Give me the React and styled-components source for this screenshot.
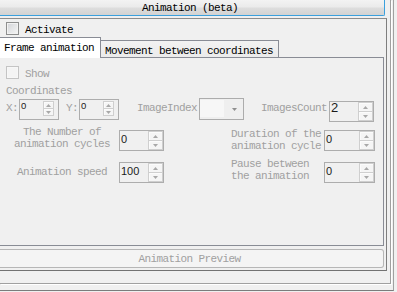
import React from 'react';
import styled, { createGlobalStyle } from 'styled-components';

const Global = createGlobalStyle`
  html, body { margin: 0; padding: 0; background: #f0f0f0; }
  body {
    font-family: "Liberation Mono", "DejaVu Sans Mono", monospace;
    font-size: 11px;
    letter-spacing: -0.6px;
    color: #000;
  }
  * { box-sizing: border-box; }
`;

const Shell = styled.div`
  width: 394px;
  height: 291px;
  border-right: 1px solid #a0a0a0;
  border-bottom: 1px solid #7c7c7c;
  padding: 0 2px 6px 0;
`;

const Inner = styled.div`
  width: 391px;
  height: 284px;
  border-right: 1px solid #a0a0a0;
  border-bottom: 1px solid #a0a0a0;
  box-shadow: 1px 1px 0 #ffffff;
  display: flex;
  flex-direction: column;
`;

const HeaderButton = styled.div`
  width: 385px;
  height: 16px;
  border-right: 1px solid #3ba0dd;
  border-bottom: 1px solid #3ba0dd;
  border-bottom-right-radius: 2px;
  background: linear-gradient(#f3f3f3, #ebebeb 45%, #dddddd 55%, #d3d3d3);
  text-align: center;
  padding: 2px 4px 0 0;
  line-height: 12px;
  white-space: nowrap;
`;

const GroupBox = styled.div`
  margin-top: 2px;
  width: 387px;
  height: 253px;
  border-top: 1px solid #8c8c8c;
  border-right: 1px solid #7e7e7e;
  border-bottom: 1px solid #727272;
  display: flex;
  flex-direction: column;
`;

const CheckRow = styled.div`
  margin-top: ${p => p.$top}px;
  padding-left: 6px;
  height: 13px;
  display: flex;
  align-items: flex-start;
  gap: 6px;
`;

const CheckBox = styled.div`
  width: 13px;
  height: 13px;
  flex: none;
  border: 1px solid ${p => (p.$disabled ? '#c4c4c4' : '#8e8f8f')};
  background: ${p =>
    p.$disabled ? '#f4f4f4' : 'linear-gradient(135deg, #d2d4d8, #f6f6f6)'};
  box-shadow: inset 0 0 0 1px ${p => (p.$disabled ? '#f7f7f7' : '#f2f2f2')};
`;

const CheckText = styled.span`
  margin-top: 2px;
  line-height: 12px;
  color: ${p => (p.$disabled ? '#a0a0a0' : '#000')};
`;

const TabStrip = styled.div`
  margin-top: 2px;
  width: 384px;
  height: 21px;
  display: flex;
  align-items: flex-end;
`;

const Tab = styled.div`
  width: ${p => p.$w}px;
  height: ${p => (p.$active ? 21 : 18)}px;
  border-top: 1px solid #898c95;
  border-right: 1px solid #898c95;
  border-bottom: ${p => (p.$active ? 'none' : '1px solid #898c95')};
  background: ${p => (p.$active ? '#ffffff' : 'linear-gradient(#f2f2f2, #ebebeb)')};
  padding: 4px 0 0 4px;
  line-height: 12px;
  white-space: nowrap;
`;

const TabFill = styled.div`
  flex: 1;
  height: 1px;
  background: #898c95;
`;

const TabPage = styled.div`
  width: 384px;
  height: 188px;
  border-right: 1px solid #898c95;
  border-bottom: 1px solid #898c95;
  padding-left: 6px;
  display: flex;
  flex-direction: column;
  color: #a0a0a0;
`;

const SectionLabel = styled.div`
  margin-top: 6px;
  line-height: 12px;
`;

const FieldRow = styled.div`
  margin-top: ${p => p.$top}px;
  height: 21px;
  display: flex;
  align-items: flex-start;
`;

const Label = styled.span`
  margin: ${p => p.$top ?? 3}px ${p => p.$right ?? 0}px 0 ${p => p.$left ?? 0}px;
  line-height: 12px;
  white-space: nowrap;
  flex: none;
`;

const MultiLabel = styled.div`
  flex: none;
  width: ${p => p.$w}px;
  margin: ${p => p.$top}px 0 0 ${p => p.$left ?? 0}px;
  line-height: 12px;
  text-align: ${p => p.$align};
  white-space: pre;
`;

const SpinBox = styled.div`
  flex: none;
  width: ${p => p.$w}px;
  height: 21px;
  margin: ${p => p.$top ?? 0}px 0 0 ${p => p.$left ?? 0}px;
  border: 1px solid #adadad;
  background: #f0f0f0;
  display: flex;
  align-items: flex-start;
`;

const SpinValue = styled.div`
  flex: 1;
  padding: ${p => p.$pt}px 0 0 1px;
  font-family: "Liberation Sans", Arial, sans-serif;
  font-size: ${p => p.$fs}px;
  letter-spacing: 0;
  line-height: 12px;
  color: #1a1a1a;
`;

const SpinPane = styled.div`
  flex: none;
  width: ${p => (p.$compact ? 11 : 15)}px;
  height: ${p => (p.$compact ? 15 : 19)}px;
  margin: ${p => (p.$compact ? '1px 4px 0 0' : '0')};
  border: 1px solid #cfcfcf;
  background: #f5f5f5;
  display: flex;
  flex-direction: column;
`;

const SpinHalf = styled.div`
  flex: 1;
  display: flex;
  align-items: center;
  justify-content: center;
  box-shadow: inset 1px 1px 0 #fbfbfb;
  & + & { border-top: 1px solid #cfcfcf; }
`;

const Combo = styled.div`
  flex: none;
  width: 45px;
  height: 22px;
  margin: -1px 0 0 0;
  border: 1px solid #acacac;
  background: #efefef;
  display: flex;
  align-items: flex-start;
  padding-top: 1px;
`;

const ComboField = styled.div`
  width: 24px;
  height: 17px;
  background: #f7f7f7;
`;

const ComboArrow = styled.div`
  flex: 1;
  height: 18px;
  display: flex;
  align-items: center;
  justify-content: center;
  padding-left: 2px;
`;

const PreviewBar = styled.div`
  margin-top: 3px;
  width: 384px;
  height: 19px;
  border: 1px solid #b6b6b6;
  border-left: none;
  border-radius: 0 3px 3px 0;
  background: #f4f4f4;
  color: #a0a0a0;
  text-align: center;
  padding: 3px 4px 0 0;
  line-height: 12px;
  white-space: nowrap;
`;

const Arrow = ({ up, color = '#a8a8a8' }) => (
  <svg width="5" height="3" viewBox="0 0 5 3" style={{ display: 'block' }}>
    {up ? <path d="M2.5 0 L5 3 L0 3 Z" fill={color} /> : <path d="M0 0 L5 0 L2.5 3 Z" fill={color} />}
  </svg>
);

const Spin = ({ w, value, fs = 11, pt = 2, compact, top, left }) => (
  <SpinBox $w={w} $top={top} $left={left}>
    <SpinValue $fs={fs} $pt={pt}>{value}</SpinValue>
    <SpinPane $compact={compact}>
      <SpinHalf><Arrow up /></SpinHalf>
      <SpinHalf><Arrow /></SpinHalf>
    </SpinPane>
  </SpinBox>
);

export default function App() {
  return (
    <>
      <Global />
      <Shell>
        <Inner>
          <HeaderButton>Animation (beta)</HeaderButton>
          <GroupBox>
            <CheckRow $top={3}>
              <CheckBox />
              <CheckText>Activate</CheckText>
            </CheckRow>
            <TabStrip>
              <Tab $active $w={101}>Frame animation</Tab>
              <Tab $w={178}>Movement between coordinates</Tab>
              <TabFill />
            </TabStrip>
            <TabPage>
              <CheckRow $top={8} style={{ paddingLeft: 0 }}>
                <CheckBox $disabled />
                <CheckText $disabled>Show</CheckText>
              </CheckRow>
              <SectionLabel>Coordinates</SectionLabel>
              <FieldRow $top={2}>
                <Label $right={1}>X:</Label>
                <Spin w={40} value="0" fs={9.5} pt={0} compact />
                <Label $left={7} $right={1}>Y:</Label>
                <Spin w={40} value="0" fs={9.5} pt={0} compact />
                <Label $left={18} $right={2}>ImageIndex</Label>
                <Combo>
                  <ComboField />
                  <ComboArrow><Arrow color="#8f8f8f" /></ComboArrow>
                </Combo>
                <Label $left={17} $right={2}>ImagesCount</Label>
                <Spin w={45} value="2" fs={13} pt={0} top={2} />
              </FieldRow>
              <FieldRow $top={10}>
                <MultiLabel $w={112} $top={-4} $align="center">{'The Number of\nanimation cycles'}</MultiLabel>
                <Spin w={45} value="0" left={1} />
                <MultiLabel $w={93} $top={-2} $left={67} $align="left">{'Duration of the\nanimation cycle'}</MultiLabel>
                <Spin w={51} value="0" />
              </FieldRow>
              <FieldRow $top={11}>
                <MultiLabel $w={112} $top={4} $align="center">Animation speed</MultiLabel>
                <Spin w={45} value="100" left={1} />
                <MultiLabel $w={93} $top={-4} $left={67} $align="left">{'Pause between\nthe animation'}</MultiLabel>
                <Spin w={51} value="0" />
              </FieldRow>
            </TabPage>
            <PreviewBar>Animation Preview</PreviewBar>
          </GroupBox>
        </Inner>
      </Shell>
    </>
  );
}
